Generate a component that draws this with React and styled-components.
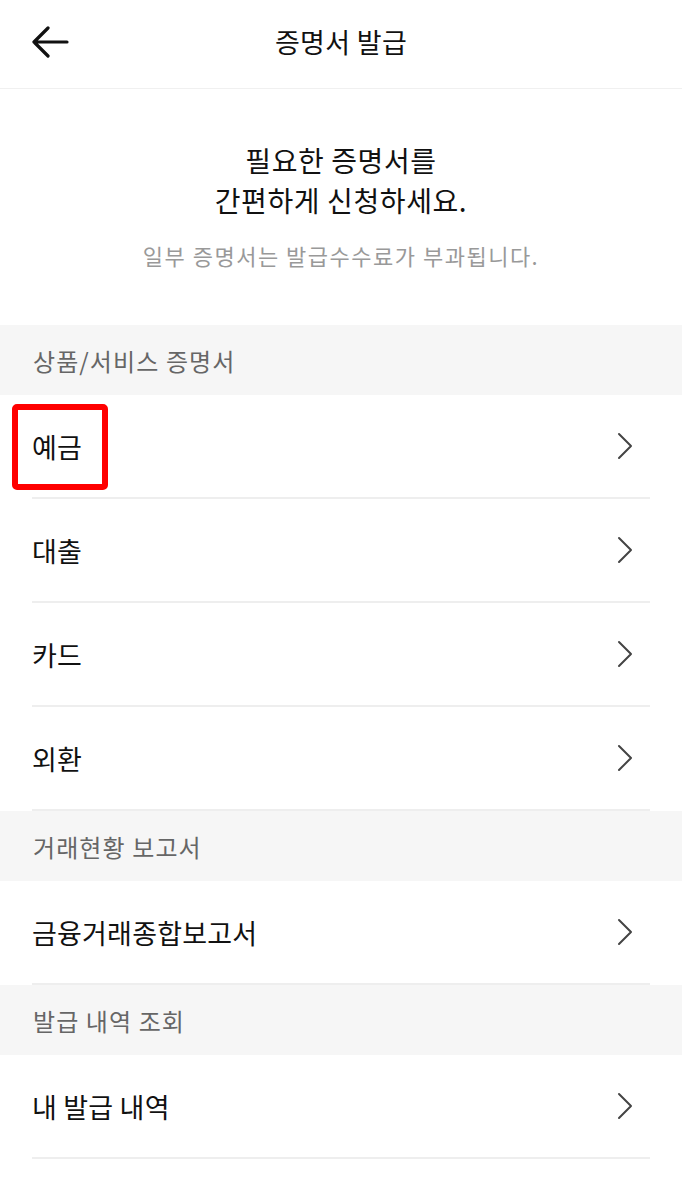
import styled, { createGlobalStyle } from 'styled-components'

const GlobalStyle = createGlobalStyle`
  html, body {
    margin: 0;
    padding: 0;
    background: #ffffff;
    font-family: "Noto Sans CJK KR", "Noto Sans", sans-serif;
    color: #111111;
  }
  * { box-sizing: border-box; }
`;

const Page = styled.div`
  width: 682px;
  min-height: 1183px;
  background: #ffffff;
`;

const Header = styled.header`
  height: 89px;
  display: flex;
  align-items: center;
  justify-content: center;
  position: relative;
  border-bottom: 1px solid #f0f0f0;
`;

const BackButton = styled.button`
  position: absolute;
  left: 28px;
  top: 22px;
  width: 44px;
  height: 40px;
  padding: 0;
  border: none;
  background: none;
  display: flex;
  align-items: center;
  justify-content: center;
`;

const Title = styled.h1`
  margin: 0 0 6px;
  font-size: 27px;
  font-weight: 400;
  color: #111;
  letter-spacing: 0.3px;
`;

const Intro = styled.section`
  height: 236px;
  padding-top: 51px;
  display: flex;
  flex-direction: column;
  align-items: center;
  text-align: center;
`;

const Headline = styled.p`
  margin: 0;
  font-size: 28px;
  line-height: 40px;
  font-weight: 400;
  letter-spacing: 0.6px;
  color: #111;
`;

const SubText = styled.p`
  margin: 20px 0 0;
  font-size: 22px;
  line-height: 30px;
  letter-spacing: 1.5px;
  color: #999;
`;

const SectionHeader = styled.div`
  height: 70px;
  background: #f6f6f6;
  display: flex;
  align-items: center;
  padding-left: 33px;
  font-size: 24px;
  letter-spacing: 1.1px;
  color: #666;
`;

const Row = styled.div`
  margin: 0 32px;
  height: 104px;
  display: flex;
  align-items: center;
  justify-content: space-between;
  padding-right: 16px;
  border-bottom: 2px solid #eeeeee;
  position: relative;
`;

const RowLabel = styled.span`
  font-size: 27px;
  color: #111;
  letter-spacing: 0.2px;
`;

const Highlight = styled.div`
  position: absolute;
  left: -20px;
  top: 9px;
  width: 96px;
  height: 86px;
  border: 6px solid #ff0000;
  border-radius: 5px;
  pointer-events: none;
`;

const Chevron = () => (
  <svg width="18" height="28" viewBox="0 0 18 28" fill="none">
    <path d="M3 2 L15 14 L3 26" stroke="#444" strokeWidth="2" strokeLinecap="round" strokeLinejoin="round" />
  </svg>
);

const BackArrow = () => (
  <svg width="38" height="32" viewBox="0 0 38 32" fill="none">
    <path d="M3 16 H36 M17 2 L3 16 L17 30" stroke="#111" strokeWidth="3.2" strokeLinecap="round" strokeLinejoin="round" />
  </svg>
);

const sections = [
  { title: '상품/서비스 증명서', items: ['예금', '대출', '카드', '외환'] },
  { title: '거래현황 보고서', items: ['금융거래종합보고서'] },
  { title: '발급 내역 조회', items: ['내 발급 내역'] },
];

export default function App() {
  return (
    <Page>
      <GlobalStyle />
      <Header>
        <BackButton aria-label="back">
          <BackArrow />
        </BackButton>
        <Title>증명서 발급</Title>
      </Header>

      <Intro>
        <Headline>필요한 증명서를</Headline>
        <Headline>간편하게 신청하세요.</Headline>
        <SubText>일부 증명서는 발급수수료가 부과됩니다.</SubText>
      </Intro>

      {sections.map((s) => (
        <div key={s.title}>
          <SectionHeader>{s.title}</SectionHeader>
          {s.items.map((item) => (
            <Row key={item}>
              {item === '예금' && <Highlight />}
              <RowLabel>{item}</RowLabel>
              <Chevron />
            </Row>
          ))}
        </div>
      ))}
    </Page>
  )
}
